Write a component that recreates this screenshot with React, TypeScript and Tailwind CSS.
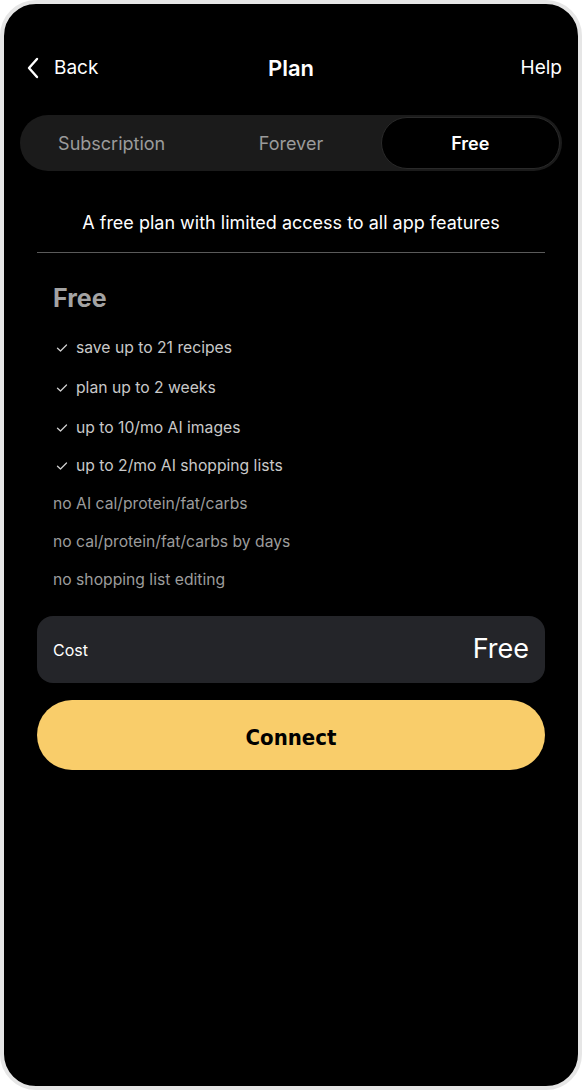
import React from "react";

const Check = () => (
  <svg width="12" height="12" viewBox="0 0 12 12" fill="none" className="shrink-0">
    <path d="M1.5 6.2 L4.5 9 L10.5 3" stroke="#cfcfcf" strokeWidth="1.3" strokeLinecap="round" strokeLinejoin="round" />
  </svg>
);

export default function App() {
  const checks = [
    "save up to 21 recipes",
    "plan up to 2 weeks",
    "up to 10/mo AI images",
    "up to 2/mo AI shopping lists",
  ];
  const nos = [
    "no AI cal/protein/fat/carbs",
    "no cal/protein/fat/carbs by days",
    "no shopping list editing",
  ];
  return (
    <div className="w-[582px] h-[1090px] bg-white" style={{ fontFamily: "Inter, 'Noto Sans', sans-serif" }}>
      <div className="h-full border-4 border-[#e6e6e6] rounded-[36px] bg-black overflow-hidden flex flex-col">
        {/* Header */}
        <div className="relative flex items-center justify-between h-[40px] mt-[44px] pl-[22px] pr-[16px]">
          <div className="flex items-center gap-[12px] text-white text-[19px]">
            <svg width="16" height="22" viewBox="0 0 16 22" fill="none">
              <path d="M11 2 L3 11 L11 20" stroke="white" strokeWidth="2.4" strokeLinecap="round" strokeLinejoin="round" />
            </svg>
            <span>Back</span>
          </div>
          <div className="absolute left-1/2 -translate-x-1/2 text-white text-[22px] font-semibold">Plan</div>
          <div className="text-white text-[19px]">Help</div>
        </div>

        {/* Segmented */}
        <div className="mx-[16px] mt-[27px] h-[56px] rounded-full bg-[#1b1b1b] p-[2px] grid grid-cols-3">
          <div className="flex items-center justify-center text-[18px] text-[#9b9b9b]">Subscription</div>
          <div className="flex items-center justify-center text-[18px] text-[#9b9b9b]">Forever</div>
          <div className="flex items-center justify-center text-[18px] text-white font-semibold bg-black rounded-full border border-[#2a2a2a]">Free</div>
        </div>

        {/* Description */}
        <div className="mt-[40px] text-center text-white text-[18px] leading-[24px]">
          A free plan with limited access to all app features
        </div>
        <div className="mx-[33px] mt-[17px] h-px bg-[#5a5a5a]" />

        <div className="px-[49px] mt-[30px]">
          <div className="text-[25px] font-bold text-[#a3a3a3] leading-[30px]">Free</div>
          <div className="mt-[23px] flex flex-col">
            {checks.map((c, i) => (
              <div key={c} className={`flex items-center gap-[8px] pl-[3px] h-[24px] text-[15.7px] text-[#c9c9c9] ${i === 0 ? "" : i === 3 ? "mt-[14px]" : "mt-[16px]"}`}>
                <Check />
                <span>{c}</span>
              </div>
            ))}
            {nos.map((c) => (
              <div key={c} className="flex items-center h-[24px] mt-[14px] text-[15.7px] text-[#9c9c9c]">
                {c}
              </div>
            ))}
          </div>
        </div>

        {/* Cost */}
        <div className="mx-[33px] mt-[24px] h-[67px] rounded-[16px] bg-[#242529] flex items-center justify-between px-[16px]">
          <span className="text-white text-[16px]">Cost</span>
          <span className="text-white text-[27px]">Free</span>
        </div>

        {/* Connect */}
        <div className="mx-[33px] mt-[17px] h-[70px] rounded-full bg-[#f9cd6a] flex items-center justify-center pt-[4px]">
          <span className="text-black text-[22px] font-bold" style={{ fontFamily: "'DejaVu Sans Condensed', 'DejaVu Sans', sans-serif", WebkitTextStroke: "0px" }}>Connect</span>
        </div>
      </div>
    </div>
  );
}
